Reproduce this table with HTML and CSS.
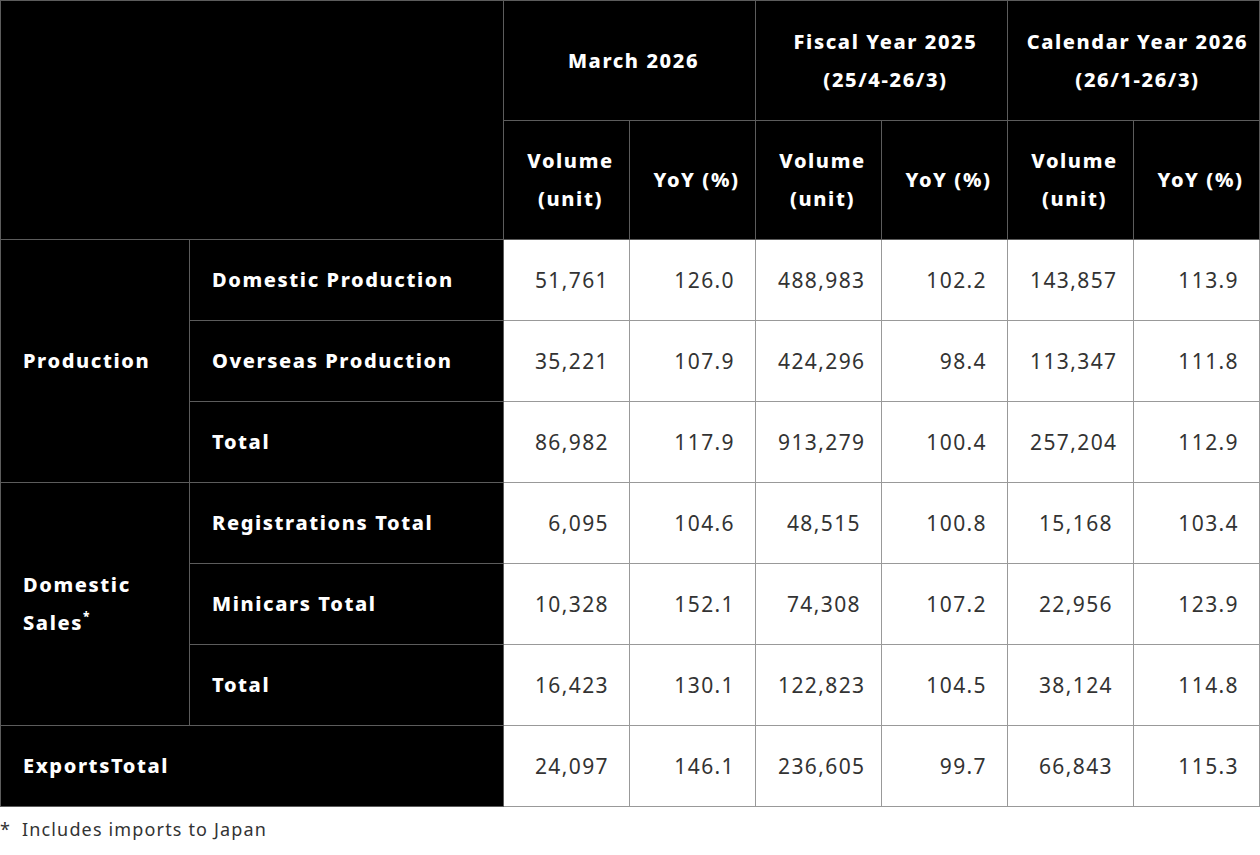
FILE: index.html
```
<!DOCTYPE html>
<html lang="en">
<head>
<meta charset="utf-8">
<title>Production and Sales</title>
<link rel="stylesheet" href="styles.css">
</head>
<body>
<table class="report">
  <colgroup>
    <col class="c-group">
    <col class="c-label">
    <col class="c-num"><col class="c-num"><col class="c-num"><col class="c-num"><col class="c-num"><col class="c-num">
  </colgroup>
  <thead>
    <tr class="h1">
      <th class="dark" colspan="2" rowspan="2"></th>
      <th class="dark center" colspan="2">March 2026</th>
      <th class="dark center" colspan="2">Fiscal Year 2025<br>(25/4-26/3)</th>
      <th class="dark center" colspan="2">Calendar Year 2026<br>(26/1-26/3)</th>
    </tr>
    <tr class="h2">
      <th class="dark center">Volume<br>(unit)</th>
      <th class="dark center">YoY (%)</th>
      <th class="dark center">Volume<br>(unit)</th>
      <th class="dark center">YoY (%)</th>
      <th class="dark center">Volume<br>(unit)</th>
      <th class="dark center">YoY (%)</th>
    </tr>
  </thead>
  <tbody>
    <tr>
      <th class="dark label" rowspan="3">Production</th>
      <th class="dark label">Domestic Production</th>
      <td>51,761</td><td>126.0</td><td>488,983</td><td>102.2</td><td>143,857</td><td>113.9</td>
    </tr>
    <tr>
      <th class="dark label">Overseas Production</th>
      <td>35,221</td><td>107.9</td><td>424,296</td><td>98.4</td><td>113,347</td><td>111.8</td>
    </tr>
    <tr>
      <th class="dark label">Total</th>
      <td>86,982</td><td>117.9</td><td>913,279</td><td>100.4</td><td>257,204</td><td>112.9</td>
    </tr>
    <tr>
      <th class="dark label" rowspan="3">Domestic<br>Sales<sup>*</sup></th>
      <th class="dark label">Registrations Total</th>
      <td>6,095</td><td>104.6</td><td>48,515</td><td>100.8</td><td>15,168</td><td>103.4</td>
    </tr>
    <tr>
      <th class="dark label">Minicars Total</th>
      <td>10,328</td><td>152.1</td><td>74,308</td><td>107.2</td><td>22,956</td><td>123.9</td>
    </tr>
    <tr>
      <th class="dark label">Total</th>
      <td>16,423</td><td>130.1</td><td>122,823</td><td>104.5</td><td>38,124</td><td>114.8</td>
    </tr>
    <tr>
      <th class="dark label" colspan="2">ExportsTotal</th>
      <td>24,097</td><td>146.1</td><td>236,605</td><td>99.7</td><td>66,843</td><td>115.3</td>
    </tr>
  </tbody>
</table>
<p class="note"><span class="mark">*</span>Includes imports to Japan</p>
</body>
</html>
```
FILE: styles.css
```
html, body {
  margin: 0;
  padding: 0;
  background: #fff;
}
body {
  font-family: "Noto Sans", "Open Sans", sans-serif;
  color: #333;
}
.report {
  border-collapse: collapse;
  table-layout: fixed;
  width: 1260px;
}
.c-group { width: 189px; }
.c-label { width: 314px; }
.c-num { width: 126px; }
.report th, .report td {
  border: 1px solid #999;
  padding: 0 22px;
  box-sizing: border-box;
}
.report .dark {
  background: #000;
  color: #fff;
  border-color: #5c5c5c;
  font-weight: 800;
  font-size: 20px;
  line-height: 38px;
  letter-spacing: 1.6px;
}
.h1 { height: 120px; }
.h2 { height: 119px; }
tbody tr { height: 81px; }
.report .center { text-align: center; padding: 0 0 0 8px; }
.label { text-align: left; }
.report td {
  text-align: right;
  font-size: 21px;
  color: #333;
  font-weight: 400;
  letter-spacing: 1.4px;
  padding-right: 20px;
}
sup {
  font-size: 12px;
  line-height: 0;
  vertical-align: 9px;
  letter-spacing: 0;
}
.note {
  margin: 10px 0 0;
  font-size: 18px;
  color: #333;
  letter-spacing: 1.15px;
}
.mark { display: inline-block; width: 22px; letter-spacing: 0; }
```
